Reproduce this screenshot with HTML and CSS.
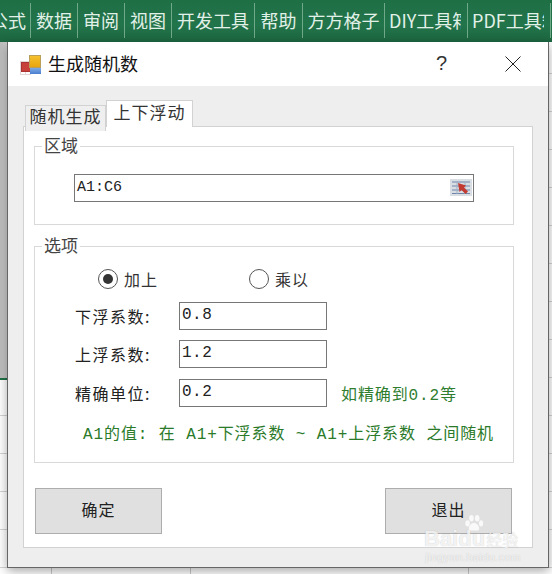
FILE: index.html
```html
<!DOCTYPE html>
<html lang="zh-CN">
<head>
<meta charset="utf-8">
<title>生成随机数</title>
<link rel="stylesheet" href="styles.css">
</head>
<body>
<div class="desktop">
  <nav class="ribbon">
    <span class="rib w30 clip-left"><span>公式</span></span>
    <span class="rib w47">数据</span>
    <span class="rib w47">审阅</span>
    <span class="rib w47">视图</span>
    <span class="rib w83">开发工具</span>
    <span class="rib w48">帮助</span>
    <span class="rib w82">方方格子</span>
    <span class="rib w83 clip"><span>DIY工具箱</span></span>
    <span class="rib w83 clip"><span>PDF工具箱</span></span>
  </nav>
  <div class="sheet"><div class="sheet-header"></div></div>

  <section class="dialog">
    <header class="titlebar">
      <svg class="app-icon" width="22" height="22" viewBox="0 0 22 22">
        <defs>
          <linearGradient id="yel" x1="0" y1="0" x2="0" y2="1"><stop offset="0" stop-color="#f6c431"/><stop offset="1" stop-color="#e8a20e"/></linearGradient>
          <linearGradient id="blu" x1="0" y1="0" x2="0" y2="1"><stop offset="0" stop-color="#7fa9e6"/><stop offset="1" stop-color="#4a7fd0"/></linearGradient>
        </defs>
        <rect x="0.5" y="7.5" width="10" height="13" fill="#fff" stroke="#e3d6d6"/>
        <path d="M5.5 17.5v3" stroke="#e3d6d6" fill="none"/>
        <rect x="1.5" y="8.5" width="9" height="9" fill="#c8403a" stroke="#a33"/>
        <rect x="9" y="1" width="12" height="13" fill="url(#yel)"/>
        <rect x="9.5" y="1.5" width="11" height="12" fill="none" stroke="#b9a05a"/>
        <rect x="10" y="14" width="11" height="6" fill="url(#blu)"/>
      </svg>
      <h1 class="title">生成随机数</h1>
      <span class="help">?</span>
      <svg class="close" width="16" height="16" viewBox="0 0 16 16"><path d="M0.5 0.5L15.5 15.5M15.5 0.5L0.5 15.5" stroke="#222" stroke-width="1" fill="none"/></svg>
    </header>
    <div class="body">
      <div class="tabs">
        <div class="tab">随机生成</div>
        <div class="tab active">上下浮动</div>
      </div>
      <div class="panel">
        <fieldset class="group area">
          <legend>区域</legend>
          <div class="field range">
            <span>A1:C6</span>
            <svg class="range-icon" width="22" height="17" viewBox="0 0 22 17">
              <rect width="22" height="17" fill="#d9dee5"/>
              <path d="M2 3h18M2 7h18M2 11h18M2 14.5h18" stroke="#6f86a8" stroke-width="1"/>
              <path d="M7 2v13M15 2v13" stroke="#9fb0c6"/>
              <path d="M8 4l8 2.5-2 2 4 4-2.5 2.5-4-4-2 2z" fill="#c23b32"/>
            </svg>
          </div>
        </fieldset>
        <fieldset class="group options">
          <legend>选项</legend>
          <div class="radios">
            <div class="radio on"><i class="dot"></i><span>加上</span></div>
            <div class="radio"><i class="dot"></i><span>乘以</span></div>
          </div>
          <div class="row"><label>下浮系数:</label><div class="field num">0.8</div></div>
          <div class="row"><label>上浮系数:</label><div class="field num">1.2</div></div>
          <div class="row"><label>精确单位:</label><div class="field num">0.2</div><span class="hint">如精确到0.2等</span></div>
          <p class="note">A1的值: 在 A1+下浮系数 ~ A1+上浮系数 之间随机</p>
        </fieldset>
        <div class="actions">
          <button class="btn">确定</button>
          <button class="btn">退出</button>
        </div>
      </div>
    </div>
  </section>

  <div class="watermark">
    <svg class="paw" width="20" height="18" viewBox="0 0 30 28"><g fill="#fff" fill-opacity=".8"><ellipse cx="5" cy="13" rx="3.5" ry="5"/><ellipse cx="11" cy="5" rx="3.5" ry="5"/><ellipse cx="20" cy="5" rx="3.5" ry="5"/><ellipse cx="26" cy="13" rx="3.2" ry="5"/><path d="M15 12c4 0 9 6 8 10-1 3-5 2-8 2s-7 1-8-2c-1-4 4-10 8-10z"/></g></svg>
    <div class="wm-logo">Baidu<span class="wm-cn">经验</span></div>
    <div class="wm-url">jingyan.baidu.com</div>
  </div>
</div>
</body>
</html>
```
FILE: styles.css
```css
* { box-sizing: border-box; }
html, body { margin: 0; padding: 0; }
body { width: 552px; height: 574px; overflow: hidden; font-family: "Noto Sans CJK SC", "Noto Sans", sans-serif; }

.desktop { position: relative; width: 552px; height: 574px; overflow: hidden; background: #fff; }

.ribbon {
  display: flex; height: 42px; padding-top: 3px; align-items: flex-start;
  background: linear-gradient(#1f6f45, #22744a 60%, #1c6640);
  color: #e2f1e8; font-size: 18px; line-height: 35px;
}
.rib { display: block; height: 35px; border-right: 1px solid #6fa98a; text-align: center; white-space: nowrap; flex: none; }
.w30 { width: 31px; }
.w47 { width: 47px; }
.w48 { width: 48px; }
.w82 { width: 82px; }
.w83 { width: 83px; }
.clip { text-align: left; padding: 0 6px 0 4px; }
.clip span { display: block; overflow: hidden; }
.clip-left { overflow: hidden; display: flex; justify-content: flex-end; padding-right: 4px; }
.clip-left span { flex: none; }

.sheet {
  height: 532px;
  background-color: #fff;
  background-image:
    linear-gradient(#c9c9c9, #c9c9c9),
    linear-gradient(#c9c9c9, #c9c9c9),
    linear-gradient(#c9c9c9, #c9c9c9),
    repeating-linear-gradient(to bottom, transparent 0 37px, #d4d4d4 37px 38px);
  background-size: 1px 100%, 1px 100%, 1px 100%, 100% 100%;
  background-position: 51px 0, 190px 0, 468px 0, 0 -6px;
  background-repeat: no-repeat;
}
.sheet-header { width: 8px; height: 338px; background: linear-gradient(to right, #bdbdbd, #cfcfcf); border-bottom: 2px solid #217346; }

.dialog {
  position: absolute; left: 7px; top: 42px; width: 542px; height: 526px;
  border: 1px solid #666; border-top: 0;
  background: #eee;
  box-shadow: 0 3px 10px rgba(0,0,0,.35);
  display: flex; flex-direction: column;
}

.titlebar { height: 44px; flex: none; background: #fff; display: flex; align-items: center; padding-left: 12px; }
.app-icon { flex: none; margin-top: 1px; }
.title { margin: 0 0 2px 6px; font-size: 18px; font-weight: 400; color: #111; line-height: 24px; flex: 1; }
.help { font-size: 20px; color: #333; font-family: "Liberation Sans", sans-serif; margin: 0 58px 2px 0; line-height: 24px; }
.close { margin-right: 27px; flex: none; }

.body { flex: 1; padding-left: 15px; }
.tabs { height: 40px; display: flex; align-items: flex-start; padding: 14px 0 0 2px; position: relative; z-index: 1; }
.tab {
  width: 81px; height: 26px; margin-top: 5px;
  background: #efefef; border: 1px solid #d2d2d2; border-bottom: 0;
  font-size: 17px; line-height: 20px; color: #333; text-align: center; white-space: nowrap; letter-spacing: 1px;
}
.tab.active { width: 87px; height: 27px; margin-top: 0; background: #fff; letter-spacing: 1px; line-height: 22px; }

.panel { width: 510px; height: 422px; background: #fff; border: 1px solid #d2d2d2; padding: 7px 0 0 10px; }

.group { margin: 0; padding: 0; width: 480px; border: 1px solid #d9d9d9; min-width: 0; }
.group legend { margin-left: 7px; padding: 0 2px 3px; font-size: 17px; line-height: 22px; color: #444; }
.area { height: 91px; }
.options { height: 229px; margin-top: 9px; }

.field { border: 1px solid #777; background: #fff; font-family: "Liberation Mono", monospace; color: #222; font-size: 16px; }
.range { width: 400px; height: 28px; margin: 15px 0 0 39px; padding: 0 0 2px 2px; display: flex; align-items: center; justify-content: space-between; font-size: 15px; }
.range-icon { margin-right: 1px; flex: none; }

.radios { display: flex; height: 33px; padding: 10px 0 0 63px; }
.radio { display: flex; align-items: center; gap: 6px; width: 151px; height: 20px; font-size: 16px; color: #333; letter-spacing: 1px; }
.dot { width: 20px; height: 20px; border: 1px solid #555; border-radius: 50%; background: #fff; flex: none; position: relative; }
.radio.on .dot::after { content: ""; position: absolute; left: 4px; top: 4px; width: 10px; height: 10px; border-radius: 50%; background: #333; }

.row { display: flex; align-items: center; height: 28px; margin-top: 10px; }
.row label { display: block; width: 144px; padding-left: 40px; font-size: 16px; line-height: 28px; letter-spacing: 1.5px; color: #222; white-space: nowrap; flex: none; }
.row + .row + .row { margin-top: 11px; }
.num { width: 148px; height: 28px; padding-left: 2px; line-height: 25px; letter-spacing: .5px; flex: none; }
.hint { margin-left: 14px; font: 16px "Liberation Mono", "Noto Sans CJK SC", monospace; letter-spacing: .9px; color: #2f7d2f; white-space: nowrap; }
.note { margin: 16px 0 0 48px; font: 16px/24px "Liberation Mono", "Noto Sans CJK SC", monospace; color: #2a7a2a; white-space: nowrap; letter-spacing: .9px; }

.actions { display: flex; justify-content: space-between; width: 477px; margin: 25px 0 0 1px; }
.btn { width: 127px; height: 46px; background: #e0e0e0; border: 1px solid #adadad; font: 16px/24px "Noto Sans CJK SC", sans-serif; color: #222; letter-spacing: 1px; padding: 0 0 5px; }

.watermark { position: absolute; left: 424px; top: 515px; width: 98px; color: rgba(255,255,255,.78); pointer-events: none; text-shadow: 0 0 1px rgba(90,90,90,.35); }
.paw { position: absolute; left: 40px; top: 0; }
.wm-logo { display: flex; align-items: baseline; padding-top: 12px; font: 700 22px/24px "Liberation Sans", sans-serif; white-space: nowrap; }
.wm-cn { font: 400 16px/24px "Noto Sans CJK SC", sans-serif; margin-left: 1px; }
.wm-url { font: 11px/13px "Liberation Sans", sans-serif; letter-spacing: .4px; text-align: center; white-space: nowrap; }
```
